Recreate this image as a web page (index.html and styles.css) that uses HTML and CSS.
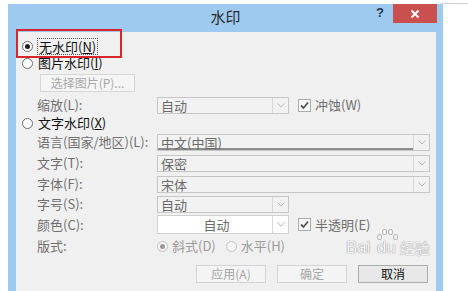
FILE: index.html
```html
<!DOCTYPE html>
<html lang="zh-CN">
<head>
  <meta charset="UTF-8" />
  <title>水印</title>
  <link rel="stylesheet" href="styles.css">
</head>
<body>
  <div class="topline"></div>

  <div class="window">
    <div class="titlebar">
      <span></span>
      <span class="title">水印</span>
      <div class="controls">
        <span class="help">?</span>
        <span class="close">
          <svg width="10" height="10" viewBox="0 0 10 10"><path d="M1.5 1.5 L8.5 8.5 M8.5 1.5 L1.5 8.5" stroke="#fff" stroke-width="2"/></svg>
        </span>
      </div>
    </div>

    <div class="content">
      <div class="opt first">
        <span class="radio on"></span>
        <span class="focus">无水印(<u>N</u>)</span>
      </div>
      <div class="opt second">
        <span class="radio"></span>
        <span>图片水印(<u>I</u>)</span>
      </div>
      <div class="pickbtn">选择图片(P)...</div>
      <div class="field zoom">
        <span class="label">缩放(L):</span>
        <div class="select">
          <span class="val">自动</span>
          <span class="arrow"><svg width="8" height="5" viewBox="0 0 8 5"><path d="M0.5 0.5 L4 4 L7.5 0.5" fill="none" stroke="#b5b5b5"/></svg></span>
        </div>
        <span class="check"><span class="box"><svg width="11" height="11" viewBox="0 0 11 11"><path d="M2 5.5 L4.5 8 L9 2.5" fill="none" stroke="#555" stroke-width="1.8"/></svg></span>冲蚀(W)</span>
      </div>
      <div class="opt third">
        <span class="radio"></span>
        <span>文字水印(<u>X</u>)</span>
      </div>

      <div class="field lang">
        <span class="label">语言(国家/地区)(L):</span>
        <div class="select wide">
          <span class="val marked">中文(中国)</span>
          <span class="arrow"><svg width="8" height="5" viewBox="0 0 8 5"><path d="M0.5 0.5 L4 4 L7.5 0.5" fill="none" stroke="#b5b5b5"/></svg></span>
        </div>
      </div>
      <div class="field">
        <span class="label">文字(T):</span>
        <div class="select wide">
          <span class="val">保密</span>
          <span class="arrow"><svg width="8" height="5" viewBox="0 0 8 5"><path d="M0.5 0.5 L4 4 L7.5 0.5" fill="none" stroke="#b5b5b5"/></svg></span>
        </div>
      </div>
      <div class="field">
        <span class="label">字体(F):</span>
        <div class="select wide">
          <span class="val">宋体</span>
          <span class="arrow"><svg width="8" height="5" viewBox="0 0 8 5"><path d="M0.5 0.5 L4 4 L7.5 0.5" fill="none" stroke="#b5b5b5"/></svg></span>
        </div>
      </div>
      <div class="field tight">
        <span class="label">字号(S):</span>
        <div class="select">
          <span class="val">自动</span>
          <span class="arrow"><svg width="8" height="5" viewBox="0 0 8 5"><path d="M0.5 0.5 L4 4 L7.5 0.5" fill="none" stroke="#b5b5b5"/></svg></span>
        </div>
      </div>
      <div class="field tight color">
        <span class="label">颜色(C):</span>
        <div class="select white">
          <span class="val center">自动</span>
          <span class="arrow"><svg width="8" height="5" viewBox="0 0 8 5"><path d="M0.5 0.5 L4 4 L7.5 0.5" fill="none" stroke="#b5b5b5"/></svg></span>
        </div>
        <span class="check"><span class="box"><svg width="11" height="11" viewBox="0 0 11 11"><path d="M2 5.5 L4.5 8 L9 2.5" fill="none" stroke="#555" stroke-width="1.8"/></svg></span>半透明(E)</span>
      </div>
      <div class="field layout">
        <span class="label">版式:</span>
        <div class="choices">
          <span class="choice"><span class="radio dim on"></span>斜式(D)</span>
          <span class="choice"><span class="radio dim"></span>水平(H)</span>
        </div>
      </div>

      <div class="actions">
        <span class="btn">应用(A)</span>
        <span class="btn">确定</span>
        <span class="btn default">取消</span>
      </div>
    </div>
  </div>

  <div class="highlight"></div>

  <div class="watermark">
    <span class="wm-bai">Bai</span>
    <span class="wm-du">du</span>
    <span class="wm-jy">经验</span>
    <span class="paw">
      <i></i><i></i><i></i><i></i>
    </span>
  </div>
</body>
</html>
```

FILE: styles.css
```css
* {
  margin: 0;
  padding: 0;
  box-sizing: border-box;
}
body {
  width: 468px;
  height: 291px;
  overflow: hidden;
  position: relative;
  background: #fff;
  font-family: "Noto Sans CJK SC", "Noto Sans", sans-serif;
  font-size: 13px;
  line-height: 16px;
  color: #111;
}
u {
  text-decoration: underline;
  text-underline-offset: 1px;
}

/* thin line of the window behind, top right */
.topline {
  position: absolute;
  top: 3px;
  left: 441px;
  width: 27px;
  height: 1px;
  background: #cfcfcf;
}

.window {
  margin: 4px 0 0 8px;
  width: 435px;
  height: 287px;
  background: #9fcaf0;
  padding: 0 7px 0 8px;
  display: flex;
  flex-direction: column;
}

.titlebar {
  height: 28px;
  margin: 0 -7px 0 -8px;
  display: grid;
  grid-template-columns: 1fr auto 1fr;
}
.title {
  font-size: 15px;
  line-height: 26px;
  color: #2b2b2b;
}
.controls {
  display: flex;
  justify-content: flex-end;
  align-items: flex-start;
  padding-right: 6px;
}
.help {
  width: 12px;
  margin-right: 7px;
  font-family: "Liberation Sans", Arial, sans-serif;
  font-weight: bold;
  font-size: 13px;
  line-height: 18px;
  color: #1f3550;
  text-align: center;
}
.close {
  width: 44px;
  height: 19px;
  background: #c9504d;
  display: flex;
  align-items: center;
  justify-content: center;
}

.content {
  flex: 1;
  background: #f0f0f0;
  padding: 5px 0 0 6px;
  display: flex;
  flex-direction: column;
}

.opt {
  display: flex;
  align-items: center;
  gap: 5px;
  height: 18px;
  color: #111;
}
.opt.second {
  height: 16px;
}
.radio {
  flex: none;
  width: 11px;
  height: 11px;
  border-radius: 50%;
  border: 1px solid #6a6a6a;
  background: #fff;
  position: relative;
}
.radio.on::after {
  content: "";
  position: absolute;
  inset: 2px;
  border-radius: 50%;
  background: #1c1c1c;
}
.radio.dim {
  border-color: #c2c2c2;
  background: #f6f6f6;
}
.radio.dim.on::after {
  background: #9a9a9a;
}
.focus {
  outline: 1px dotted #555;
  line-height: 15px;
  padding: 0 1px;
}

.pickbtn {
  margin: 3px 0 0 18px;
  width: 95px;
  height: 18px;
  border: 1px solid #d6d6d6;
  background: #f5f5f5;
  color: #a9a9a9;
  font-size: 12px;
  line-height: 16px;
  text-align: center;
}

.field {
  display: flex;
  align-items: center;
  height: 18px;
  margin-top: 3px;
  padding-left: 15px;
}
.field.zoom {
  margin-top: 4px;
}
.field.lang {
  margin-top: 1px;
}
.field.tight {
  margin-top: 2px;
}
.field.color {
  height: 19px;
}
.label {
  flex: none;
  width: 120px;
  color: #707070;
}
.select {
  flex: none;
  width: 132px;
  height: 17px;
  border: 1px solid #c6c6c6;
  background: #f2f2f2;
  display: flex;
  color: #6a6a6a;
}
.select.wide {
  width: 273px;
}
.select.white {
  background: #fff;
  height: 19px;
  border-color: #d0d0d0;
}
.val {
  flex: 1;
  padding-left: 3px;
  line-height: 15px;
}
.val.center {
  text-align: center;
  line-height: 17px;
}
.val.marked {
  box-shadow: inset 0 -2px 0 #8e8e8e;
}
.arrow {
  flex: none;
  width: 16px;
  border-left: 1px solid #d8d8d8;
  display: flex;
  align-items: center;
  justify-content: center;
}
.check {
  margin-left: 9px;
  display: flex;
  align-items: center;
  gap: 4px;
  color: #6f6f6f;
}
.box {
  width: 13px;
  height: 13px;
  border: 1px solid #aaa;
  background: #f7f7f7;
  display: flex;
  align-items: center;
  justify-content: center;
}

.choices {
  display: flex;
  gap: 10px;
}
.choice {
  display: flex;
  align-items: center;
  gap: 4px;
  color: #9a9a9a;
}

.actions {
  display: flex;
  justify-content: flex-end;
  gap: 11px;
  margin-top: 10px;
  padding-right: 8px;
}
.btn {
  width: 70px;
  height: 18px;
  border: 1px solid #d4d4d4;
  background: #f4f4f4;
  color: #a6a6a6;
  font-size: 12px;
  line-height: 16px;
  text-align: center;
}
.btn.default {
  border-color: #acacac;
  background: #e8e8e8;
  color: #111;
}

/* red annotation box over the first option */
.highlight {
  position: absolute;
  left: 16px;
  top: 29px;
  width: 106px;
  height: 29px;
  border: 2px solid #d9252c;
}

/* faint site watermark, bottom right */
.watermark {
  position: absolute;
  left: 346px;
  top: 236px;
  width: 96px;
  height: 26px;
  font-family: "Liberation Sans", Arial, sans-serif;
  font-size: 17px;
  line-height: 20px;
  color: rgba(255, 255, 255, 0.9);
  text-shadow: 0 0 1px #999, 0 0 1px #999;
}
.wm-bai {
  position: absolute;
  left: 0;
  top: 2px;
}
.wm-du {
  position: absolute;
  left: 31px;
  top: 2px;
}
.wm-jy {
  position: absolute;
  left: 54px;
  top: 2px;
  font-family: "Noto Sans CJK SC", sans-serif;
  font-size: 15px;
}
.paw {
  position: absolute;
  left: 31px;
  top: -8px;
  width: 20px;
  height: 12px;
}
.paw i {
  position: absolute;
  width: 5px;
  height: 6px;
  border-radius: 50%;
  border: 1px solid rgba(150, 150, 150, 0.7);
  background: rgba(255, 255, 255, 0.8);
}
.paw i:nth-child(1) { left: 0; top: 6px; }
.paw i:nth-child(2) { left: 5px; top: 1px; }
.paw i:nth-child(3) { left: 11px; top: 1px; }
.paw i:nth-child(4) { left: 16px; top: 6px; }
```
